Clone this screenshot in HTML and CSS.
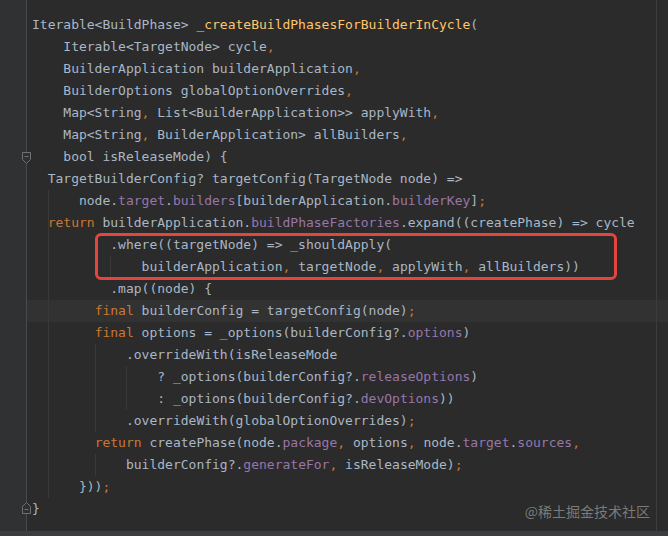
FILE: index.html
```html
<!DOCTYPE html>
<html lang="en">
<head>
<meta charset="UTF-8">
<title>build_phases.dart</title>
<link rel="stylesheet" href="styles.css">
</head>
<body>

<div class="editor">
<div class="ln">Iterable&lt;BuildPhase&gt; <span class="f">_createBuildPhasesForBuilderInCycle</span>(</div>
<div class="ln">    Iterable&lt;TargetNode&gt; cycle<span class="c">,</span></div>
<div class="ln">    BuilderApplication builderApplication<span class="c">,</span></div>
<div class="ln">    BuilderOptions globalOptionOverrides<span class="c">,</span></div>
<div class="ln">    Map&lt;String<span class="c">,</span> List&lt;BuilderApplication&gt;&gt; applyWith<span class="c">,</span></div>
<div class="ln">    Map&lt;String<span class="c">,</span> BuilderApplication&gt; allBuilders<span class="c">,</span></div>
<div class="ln"><svg class="fold" width="11" height="14" viewBox="0 0 11 14"><path d="M1.5 1.5H9.5V8.5L5.5 12.5L1.5 8.5Z" fill="#2f3031" stroke="#707070"/><path d="M3.5 5.5H7.5" stroke="#707070"/></svg>    bool isReleaseMode) {</div>
<div class="ln">  TargetBuilderConfig? targetConfig(TargetNode node) =&gt;</div>
<div class="ln">  <span class="g">    </span>node.<span class="p">target</span>.<span class="p">builders</span>[builderApplication.<span class="p">builderKey</span>]<span class="c">;</span></div>
<div class="ln">  <span class="g"><span class="k">return</span></span> builderApplication.<span class="p">buildPhaseFactories</span>.expand((createPhase) =&gt; cycle</div>
<div class="ln">  <span class="g">        </span>.where((targetNode) =&gt; _shouldApply(</div>
<div class="ln">  <span class="g">        </span><span class="g">    </span>builderApplication<span class="c">,</span> targetNode<span class="c">,</span> applyWith<span class="c">,</span> allBuilders))</div>
<div class="ln">  <span class="g">        </span>.map((node) {</div>
<div class="ln cur">  <span class="g">      </span><span class="k">final</span> builderConfig = targetConfig(node)<span class="c">;</span></div>
<div class="ln">  <span class="g">      </span><span class="k">final</span> options = _options(builderConfig?.<span class="p">options</span>)</div>
<div class="ln">  <span class="g">      </span><span class="g">    </span>.overrideWith(isReleaseMode</div>
<div class="ln">  <span class="g">      </span><span class="g">    </span><span class="g">    </span>? _options(builderConfig?.<span class="p">releaseOptions</span>)</div>
<div class="ln">  <span class="g">      </span><span class="g">    </span><span class="g">    </span>: _options(builderConfig?.<span class="p">devOptions</span>))</div>
<div class="ln">  <span class="g">      </span><span class="g">    </span>.overrideWith(globalOptionOverrides)<span class="c">;</span></div>
<div class="ln">  <span class="g">      </span><span class="k">return</span> createPhase(node.<span class="p">package</span><span class="c">,</span> options<span class="c">,</span> node.<span class="p">target</span>.<span class="p">sources</span><span class="c">,</span></div>
<div class="ln">  <span class="g">      </span><span class="g">    </span>builderConfig?.<span class="p">generateFor</span><span class="c">,</span> isReleaseMode)<span class="c">;</span></div>
<div class="ln">  <span class="g">    </span>}))<span class="c">;</span></div>
<div class="ln"><svg class="fold end" width="11" height="14" viewBox="0 0 11 14"><path d="M1.5 12.5H9.5V5.5L5.5 1.5L1.5 5.5Z" fill="#2f3031" stroke="#707070"/><path d="M3.5 8.5H7.5" stroke="#707070"/></svg>}</div>

<div class="mark"></div>
<div class="watermark">@稀土掘金技术社区</div>
</div>

</body>
</html>
```

FILE: styles.css
```css
body {
  margin: 0;
  width: 668px;
  height: 536px;
  overflow: hidden;
  background: #3b3d3f;
  font-family: "DejaVu Sans Mono", "Liberation Mono", monospace;
}
.editor {
  position: relative;
  height: 531px;
  padding-top: 14px;
  box-sizing: border-box;
  background:
    linear-gradient(to right, #303132 0 26px, #4a4a4a 26px 27px, transparent 27px),
    linear-gradient(to right, transparent 656px, #3c3c3c 656px 657px, transparent 657px),
    #2b2b2b;
}
.ln {
  position: relative;
  height: 22px;
  line-height: 22px;
  padding-left: 32px;
  white-space: pre;
  font-size: 13px;
  color: #a9b7c6;
}
.cur {
  background: linear-gradient(to right, transparent 27px, #323232 27px 656px, #3c3c3c 656px 657px, #323232 657px);
}
.g {
  display: inline-block;
  height: 22px;
  vertical-align: top;
  box-shadow: inset 1px 0 #393939;
}
.k, .c {
  color: #cc7832;
}
.f {
  color: #ffc66d;
}
.p {
  color: #9876aa;
}
.fold {
  position: absolute;
  left: 21px;
  top: 5px;
}
.fold.end {
  top: 3px;
}
.mark {
  position: absolute;
  left: 95px;
  top: 233px;
  width: 522px;
  height: 47px;
  box-sizing: border-box;
  border: 3px solid #e5453f;
  border-radius: 6px;
}
.watermark {
  position: absolute;
  right: 18px;
  bottom: 12px;
  font-family: "Noto Sans CJK SC", sans-serif;
  font-size: 14px;
  line-height: 16px;
  color: rgba(150, 150, 150, 0.75);
}
```
